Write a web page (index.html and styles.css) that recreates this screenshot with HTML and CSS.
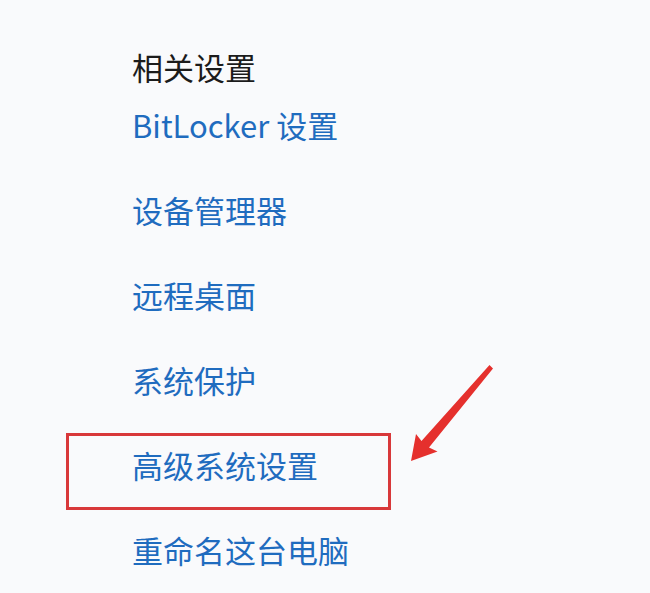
FILE: index.html
```html
<!DOCTYPE html>
<html lang="zh-CN">
<head>
<meta charset="utf-8">
<title>相关设置</title>
<link rel="stylesheet" href="styles.css">
</head>
<body>
<main class="panel">
  <h2 class="title">相关设置</h2>
  <ul class="links">
    <li class="link first">BitLocker 设置</li>
    <li class="link">设备管理器</li>
    <li class="link">远程桌面</li>
    <li class="link">系统保护</li>
    <li class="link highlighted">高级系统设置</li>
    <li class="link">重命名这台电脑</li>
  </ul>
  <svg class="arrow" width="650" height="593" viewBox="0 0 650 593" aria-hidden="true">
    <polygon points="489.5,365 493,368.5 429,447.5 437.5,451.5 411,461 416,434 421.5,441" fill="#e5302d"/>
  </svg>
</main>
</body>
</html>
```

FILE: styles.css
```css
html, body {
  margin: 0;
  padding: 0;
}
body {
  background: #f9fafc;
  width: 650px;
  height: 593px;
  overflow: hidden;
  font-family: "Noto Sans CJK SC", "Noto Sans", sans-serif;
}
.panel {
  position: relative;
  padding: 47px 0 0 132px;
  height: 593px;
  box-sizing: border-box;
}
.title {
  margin: 0;
  font-size: 31px;
  font-weight: 400;
  line-height: 40px;
  color: #1b1b1b;
}
.links {
  list-style: none;
  margin: 18px 0 0;
  padding: 0;
  display: flex;
  flex-direction: column;
  gap: 45px;
}
.link {
  font-size: 31px;
  line-height: 40px;
  color: #1f6cbf;
  white-space: nowrap;
}
.highlighted {
  position: relative;
}
.highlighted::after {
  content: "";
  position: absolute;
  left: -66px;
  top: -12px;
  width: 325px;
  height: 77px;
  border: 3px solid #d8383a;
  box-sizing: border-box;
}
.arrow {
  position: absolute;
  left: 0;
  top: 0;
}
```
